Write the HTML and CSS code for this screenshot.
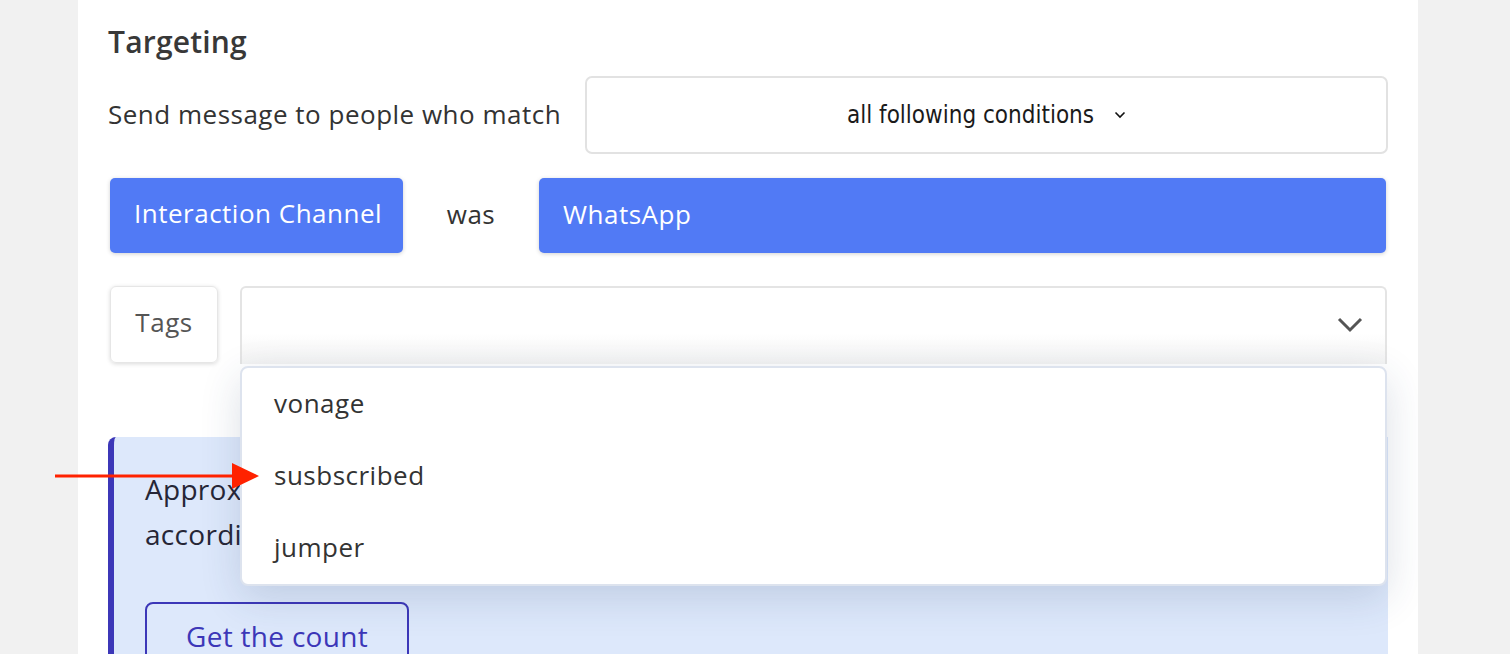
FILE: index.html
```html
<!DOCTYPE html>
<html>
<head>
<meta charset="utf-8">
<link rel="stylesheet" href="styles.css">
</head>
<body>
<div class="panel">
  <h2 class="title">Targeting</h2>
  <div class="row match-row">
    <span class="label">Send message to people who match</span>
    <div class="match-select">
      <span>all following conditions</span>
      <svg class="chev-small" width="12" height="8" viewBox="0 0 12 8"><path d="M1.5 1.5 L6 6 L10.5 1.5" fill="none" stroke="#111" stroke-width="1.6"/></svg>
    </div>
  </div>
  <div class="row cond-row">
    <div class="chip">Interaction Channel</div>
    <span class="op">was</span>
    <div class="chip value">WhatsApp</div>
  </div>
  <div class="row tags-row">
    <div class="tag-label">Tags</div>
    <div class="tag-select">
      <svg class="chev" width="26" height="16" viewBox="0 0 26 16"><path d="M2 2 L13 13 L24 2" fill="none" stroke="#555" stroke-width="3"/></svg>
      <ul class="dropdown">
        <li>vonage</li>
        <li>susbscribed</li>
        <li>jumper</li>
      </ul>
    </div>
  </div>
  <div class="info">
    <p>Approximate number of people who will receive this message,<br>according to the conditions selected above</p>
    <button class="count-btn">Get the count</button>
  </div>
</div>
<svg class="arrow" width="210" height="30" viewBox="0 0 210 30"><line x1="0" y1="15" x2="180" y2="15" stroke="#ff2200" stroke-width="3"/><polygon points="177,2 204,15 177,28" fill="#ff2200"/></svg>
</body>
</html>
```
FILE: styles.css
```css
html, body {
  margin: 0;
  padding: 0;
}
body {
  background: #f1f1f1;
  font-family: "Open Sans", "Noto Sans", sans-serif;
  color: #333;
  height: 654px;
  overflow: hidden;
  position: relative;
}
.panel {
  margin-left: 78px;
  width: 1280px;
  height: 654px;
  background: #fff;
  padding: 0 30px;
  overflow: hidden;
  position: relative;
}
.title {
  margin: 0;
  padding-top: 22px;
  font-size: 30px;
  letter-spacing: 0.2px;
  line-height: 40px;
  font-weight: 600;
  color: #383838;
}
.row {
  display: flex;
  align-items: center;
}
.match-row {
  margin-top: 14px;
  height: 78px;
}
.label {
  font-size: 26px;
  letter-spacing: 0.5px;
  color: #333;
  padding-bottom: 2px;
}
.match-select {
  margin-left: auto;
  width: 799px;
  height: 74px;
  border: 2px solid #e2e2e2;
  border-radius: 7px;
  display: flex;
  align-items: center;
  justify-content: center;
  font-family: "DejaVu Sans Condensed", "DejaVu Sans", sans-serif;
  font-stretch: condensed;
  font-size: 24px;
  color: #1a1a1a;
}
.chev-small {
  margin-left: 20px;
}
.cond-row {
  margin-top: 23px;
  height: 76px;
}
.chip {
  margin-left: 2px;
  height: 75px;
  width: 293px;
  box-sizing: border-box;
  background: #517af5;
  border-radius: 5px;
  color: #fff;
  font-size: 26px;
  letter-spacing: 0.5px;
  display: flex;
  align-items: center;
  padding-left: 24px;
  padding-bottom: 5px;
  box-shadow: 0 1px 4px rgba(0,0,0,0.18);
}
.op {
  width: 136px;
  text-align: center;
  font-size: 26px;
  letter-spacing: 0.5px;
  color: #333;
  padding-bottom: 2px;
}
.chip.value {
  margin-left: 0;
  flex: 1;
  width: auto;
  margin-right: 2px;
  padding-bottom: 2px;
}
.tags-row {
  margin-top: 33px;
  height: 78px;
  align-items: flex-start;
}
.tag-label {
  margin-left: 2px;
  width: 108px;
  height: 77px;
  box-sizing: border-box;
  border: 1px solid #e6e6e6;
  border-radius: 6px;
  box-shadow: 0 1px 4px rgba(0,0,0,0.15);
  display: flex;
  align-items: center;
  justify-content: center;
  font-size: 26px;
  letter-spacing: 0.5px;
  color: #555;
  padding-bottom: 5px;
}
.tag-select {
  margin-left: 22px;
  flex: 1;
  margin-right: 1px;
  height: 78px;
  box-sizing: border-box;
  border: 2px solid #e4e4e4;
  border-bottom: none;
  border-radius: 6px 6px 0 0;
  position: relative;
  display: flex;
  align-items: center;
  justify-content: flex-end;
  background: linear-gradient(#fff 60%, #f3f3f3);
}
.chev {
  margin-right: 22px;
  margin-top: -2px;
}
.dropdown {
  position: absolute;
  top: 78px;
  left: -2px;
  right: -2px;
  margin: 0;
  padding: 0;
  list-style: none;
  background: #fff;
  border: 2px solid #dde3ee;
  border-radius: 8px;
  box-shadow: 0 12px 40px rgba(40,60,100,0.16);
  z-index: 5;
}
.dropdown li {
  height: 72px;
  line-height: 70px;
  padding-left: 32px;
  font-size: 26px;
  letter-spacing: 0.5px;
  color: #333;
}
.info {
  margin-top: 73px;
  height: 300px;
  border-left: 6px solid #3c37b8;
  border-radius: 8px 0 0 0;
  background: #dde8fb;
  padding: 30px 0 0 31px;
}
.info p {
  margin: 0;
  font-size: 28px;
  letter-spacing: 0.3px;
  line-height: 45px;
  color: #262636;
  white-space: nowrap;
}
.count-btn {
  margin-top: 45px;
  width: 264px;
  height: 64px;
  border: 2px solid #3c37b8;
  border-radius: 8px;
  background: transparent;
  color: #3c37b8;
  font-family: inherit;
  font-size: 28px;
  letter-spacing: 0.3px;
  display: flex;
  align-items: flex-start;
  justify-content: center;
  padding: 13px 0 0;
}
.arrow {
  position: absolute;
  left: 55px;
  top: 461px;
  z-index: 10;
}
```
